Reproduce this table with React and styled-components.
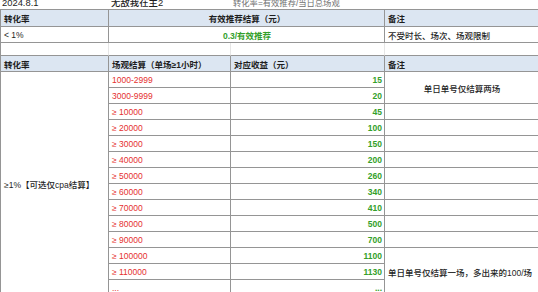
import React from "react";
import styled, { createGlobalStyle } from "styled-components";

const GlobalStyle = createGlobalStyle`
  html, body {
    margin: 0;
    padding: 0;
    background: #fff;
    overflow: hidden;
  }
  body {
    font-family: "Liberation Sans", "Noto Sans CJK SC", sans-serif;
  }
`;

const LINE = "#959595";

const tones = {
  red: "#e5302f",
  green: "#33a02a",
  muted: "#6f6f6f",
  plain: "#1e1e1e",
};

const Sheet = styled.div`
  display: grid;
  grid-template-columns: 109px 122px 154px 153px;
  grid-template-rows: 10px 17px 16px 13px 16px repeat(14, 16px);
  width: 538px;
  font-size: 8.5px;
  color: #1e1e1e;
`;

const TitleCell = styled.div`
  grid-column: span ${(p) => p.$cols || 1};
  display: flex;
  align-items: flex-end;
  padding: 0 2px;
  overflow: visible;
  white-space: nowrap;
  line-height: 12px;
  border-bottom: 1px solid ${LINE};
  box-sizing: border-box;
  font-weight: ${(p) => (p.$muted ? 400 : 500)};
  font-size: ${(p) => (p.$muted ? "8.3px" : "9.4px")};
  color: ${(p) => (p.$muted ? tones.muted : tones.plain)};
`;

const Cell = styled.div`
  grid-row: span ${(p) => p.$rows || 1};
  grid-column: span ${(p) => p.$cols || 1};
  display: flex;
  align-items: center;
  justify-content: ${(p) =>
    p.$align === "center" ? "center" : p.$align === "right" ? "flex-end" : "flex-start"};
  padding: 0 2px 0 3px;
  box-sizing: border-box;
  white-space: nowrap;
  border-bottom: 1px solid ${LINE};
  border-right: ${(p) => (p.$last ? "0" : `1px solid ${p.$faint ? "#e6e6e6" : LINE}`)};
  border-left: ${(p) => (p.$first ? `1px solid ${LINE}` : "0")};
  background: ${(p) => (p.$head ? "#dce6f2" : "#fff")};
  font-weight: ${(p) => (p.$head || p.$bold ? 700 : 500)};
  color: ${(p) => tones[p.$tone || "plain"]};
`;

const rows = [
  ["1000-2999", "15"],
  ["3000-9999", "20"],
  ["≥ 10000", "45"],
  ["≥ 20000", "100"],
  ["≥ 30000", "150"],
  ["≥ 40000", "200"],
  ["≥ 50000", "260"],
  ["≥ 60000", "340"],
  ["≥ 70000", "410"],
  ["≥ 80000", "500"],
  ["≥ 90000", "700"],
  ["≥ 100000", "1100"],
  ["≥ 110000", "1130"],
  ["...", "..."],
];

function noteFor(i) {
  if (i === 0)
    return (
      <Cell key="n0" $rows={2} $align="center" $last>
        单日单号仅结算两场
      </Cell>
    );
  if (i === 11)
    return (
      <Cell key="n11" $rows={3} $last>
        单日单号仅结算一场，多出来的100/场
      </Cell>
    );
  if (i === 1 || i > 11) return null;
  return <Cell key={"n" + i} $last />;
}

export default function App() {
  return (
    <>
      <GlobalStyle />
      <Sheet>
        <TitleCell>2024.8.1</TitleCell>
        <TitleCell>无敌我在主2</TitleCell>
        <TitleCell $cols={2} $muted>
          转化率=有效推荐/当日总场观
        </TitleCell>

        <Cell $head $first>转化率</Cell>
        <Cell $head $cols={2} $align="center">
          有效推荐结算（元）
        </Cell>
        <Cell $head $last>备注</Cell>

        <Cell $first>&lt; 1%</Cell>
        <Cell $cols={2} $align="center" $tone="green" $bold>
          0.3/有效推荐
        </Cell>
        <Cell $last>不受时长、场次、场观限制</Cell>

        <Cell $first $faint />
        <Cell $faint />
        <Cell $faint />
        <Cell $last />

        <Cell $head $first>转化率</Cell>
        <Cell $head>场观结算（单场≥1小时）</Cell>
        <Cell $head>对应收益（元）</Cell>
        <Cell $head $last>备注</Cell>

        <Cell $first $rows={14}>
          ≥1%【可选仅cpa结算】
        </Cell>
        {rows.map(([range, pay], i) => (
          <React.Fragment key={range + i}>
            <Cell $tone="red">{range}</Cell>
            <Cell $align="right" $tone="green" $bold>
              {pay}
            </Cell>
            {noteFor(i)}
          </React.Fragment>
        ))}
      </Sheet>
    </>
  );
}
